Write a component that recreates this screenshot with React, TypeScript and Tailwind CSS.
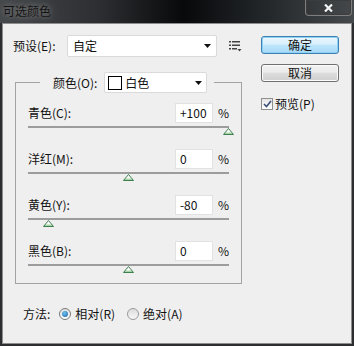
import React from "react";

const FONT = "font-['Noto_Sans_CJK_SC','Noto_Sans',sans-serif]";

function DownArrow() {
  return (
    <svg width="7" height="4" viewBox="0 0 7 4">
      <polygon points="0,0 7,0 3.5,4" fill="#111" />
    </svg>
  );
}

function Thumb() {
  return (
    <svg width="11" height="7" viewBox="0 0 11 7">
      <defs>
        <linearGradient id="tg" x1="0" y1="0" x2="0" y2="1">
          <stop offset="0" stopColor="#ffffff" />
          <stop offset="0.5" stopColor="#ffffff" />
          <stop offset="1" stopColor="#7cc07c" />
        </linearGradient>
      </defs>
      <polygon points="5.5,0.5 10.5,6.5 0.5,6.5" fill="url(#tg)" stroke="#3f7f4f" strokeWidth="1" />
    </svg>
  );
}

function SliderRow({ label, value, pos, last }: { label: string; value: string; pos: number; last?: boolean }) {
  const left = Math.round(((pos + 100) / 200) * 200);
  return (
    <div className={last ? "flex flex-col" : "flex flex-col mb-[14px]"}>
      <div className="flex items-center h-[20px] w-[201px]">
        <div className="w-[147px] leading-[14px]">{label}</div>
        <div className="w-[38px] h-[20px] bg-white border border-[#e2e2e2] flex items-center pl-[4px] leading-[14px]">
          {value}
        </div>
        <div className="ml-[5px] leading-[14px]">%</div>
      </div>
      <div className="relative w-[201px] h-[2px] mt-[3px] bg-[#9c9c9c]" />
      <div className="relative w-[201px] h-[7px]">
        <div className="absolute top-0" style={{ left: left - 5 }}>
          <Thumb />
        </div>
      </div>
    </div>
  );
}

export default function App() {
  return (
    <div className={`w-[354px] h-[346px] flex flex-col bg-[#2c2e30] text-[12px] text-[#111] ${FONT}`}>
      {/* Title bar */}
      <div className="h-[23px] flex justify-between items-start bg-[linear-gradient(to_right,#45484b_0%,#2c2e31_28%,#07090b_52%,#25282b_76%,#46494c_100%)]">
        <div className="pl-[3px] pt-[3px] text-[12px] leading-[16px] text-[#141414] [text-shadow:0_0_10px_rgba(150,150,150,0.9),0_0_4px_rgba(120,120,120,0.7)]">
          可选颜色
        </div>
        <div className="mr-[2px] w-[47px] h-[16px] border border-t-0 border-[#7e7e7e] rounded-b-[4px] shadow-[inset_0_0_0_1px_#3a3c3e] flex items-center justify-center">
          <svg width="9" height="8" viewBox="0 0 9 8">
            <path d="M1 0.5 L8 7.5 M8 0.5 L1 7.5" stroke="#f2f2f2" strokeWidth="2.2" />
          </svg>
        </div>
      </div>

      {/* Body */}
      <div className="flex-1 mx-[2px] mb-[2px] border border-[#8d8d8d] bg-[#efefef] flex flex-col">
        <div className="flex">
          {/* Left column */}
          <div className="pl-[10px] pt-[11px] w-[239px] flex flex-col">
            <div className="flex items-center h-[22px]">
              <div className="w-[54px] leading-[14px]">预设(E):</div>
              <div className="w-[150px] h-[22px] bg-white border border-[#dadada] rounded-[2px] flex items-center justify-between pl-[5px] pr-[5px]">
                <span className="leading-[14px]">自定</span>
                <DownArrow />
              </div>
              <div className="ml-[12px] mt-[1px]">
                <svg width="13" height="11" viewBox="0 0 13 11">
                  <rect x="0" y="0" width="2" height="1.5" fill="#444" />
                  <rect x="3" y="0" width="8" height="1.5" fill="#444" />
                  <rect x="0" y="3.5" width="2" height="1.5" fill="#444" />
                  <rect x="3" y="3.5" width="8" height="1.5" fill="#444" />
                  <rect x="0" y="7" width="2" height="1.5" fill="#444" />
                  <rect x="3" y="7" width="5" height="1.5" fill="#444" />
                  <polygon points="8.5,8 12.5,8 10.5,10.5" fill="#444" />
                </svg>
              </div>
            </div>

            <fieldset className="mt-[15px] ml-[2px] w-[227px] border border-[#a3a3a3] pt-[10px] pb-[10px] pl-[12px] pr-[12px] flex flex-col">
              <legend className="ml-[12px] pl-[13px] pr-[7px]">
                <div className="flex items-center h-[21px]">
                  <span className="leading-[14px] mr-[7px]">颜色(O):</span>
                  <div className="w-[103px] h-[21px] bg-white border border-[#dadada] rounded-[2px] flex items-center pl-[3px] pr-[4px]">
                    <div className="w-[14px] h-[14px] border border-black bg-white" />
                    <span className="ml-[3px] leading-[14px] flex-1">白色</span>
                    <DownArrow />
                  </div>
                </div>
              </legend>
              <SliderRow label="青色(C):" value="+100" pos={100} />
              <SliderRow label="洋红(M):" value="0" pos={0} />
              <SliderRow label="黄色(Y):" value="-80" pos={-80} />
              <SliderRow label="黑色(B):" value="0" pos={0} last />
            </fieldset>
          </div>

          {/* Right column */}
          <div className="ml-[19px] pt-[12px] flex flex-col">
            <div className="w-[78px] h-[18px] rounded-[3px] border border-[#3c7fb1] bg-[linear-gradient(to_bottom,#eaf6fd_0%,#d9f0fc_45%,#bee6fd_50%,#a7d9f5_100%)] shadow-[inset_0_0_0_1px_#8ed2f6] flex items-center justify-center leading-[14px]">
              确定
            </div>
            <div className="mt-[10px] w-[78px] h-[18px] rounded-[3px] border border-[#707070] bg-[linear-gradient(to_bottom,#f2f2f2_0%,#ebebeb_45%,#dddddd_50%,#cfcfcf_100%)] shadow-[inset_0_0_0_1px_#fbfbfb] flex items-center justify-center leading-[14px]">
              取消
            </div>
            <div className="mt-[15px] flex items-center">
              <div className="w-[12px] h-[12px] border border-[#8f8f8f] bg-[linear-gradient(to_bottom,#e6e6e6,#ffffff)] flex items-center justify-center">
                <svg width="9" height="8" viewBox="0 0 9 8">
                  <path d="M1 4 L3.5 6.5 L8 1" stroke="#3a4f7a" strokeWidth="1.6" fill="none" />
                </svg>
              </div>
              <span className="ml-[2px] leading-[14px]">预览(P)</span>
            </div>
          </div>
        </div>

        {/* Method row */}
        <div className="mt-[22px] pl-[20px] flex items-center h-[16px]">
          <span className="leading-[14px]">方法:</span>
          <div className="ml-[9px] w-[12px] h-[12px] rounded-full border border-[#7a7a7a] bg-[linear-gradient(to_bottom,#e0e0e0,#ffffff)] flex items-center justify-center">
            <div className="w-[6px] h-[6px] rounded-full bg-[radial-gradient(circle_at_40%_35%,#6fc3f0,#1a5f9e)]" />
          </div>
          <span className="ml-[4px] leading-[14px]">相对(R)</span>
          <div className="ml-[12px] w-[12px] h-[12px] rounded-full border border-[#9a9a9a] bg-[linear-gradient(to_bottom,#dcdcdc,#f8f8f8)]" />
          <span className="ml-[4px] leading-[14px]">绝对(A)</span>
        </div>
      </div>
    </div>
  );
}
